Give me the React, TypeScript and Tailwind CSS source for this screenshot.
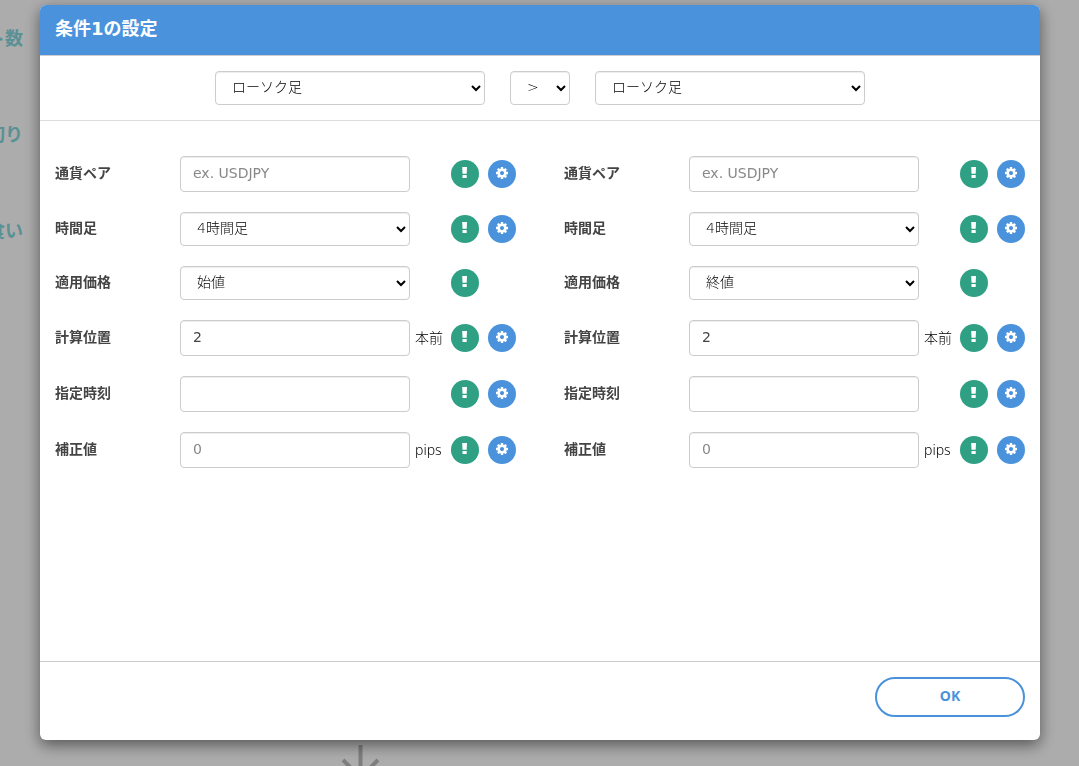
import React from 'react';

type Field = {
  name: string;
  label: string;
  type: 'text' | 'select';
  value?: string;
  placeholder?: string;
  options?: string[];
  unit?: string;
  configurable?: boolean;
};

const TIMEFRAMES = ['1分足', '5分足', '15分足', '30分足', '1時間足', '4時間足', '日足'];
const PRICES = ['始値', '高値', '安値', '終値'];
const INDICATORS = ['ローソク足', '移動平均線', 'RSI', 'MACD'];
const OPERATORS = ['>', '<', '='];

const buildFields = (price: string): Field[] => [
  { name: 'pair', label: '通貨ペア', type: 'text', placeholder: 'ex. USDJPY', configurable: true },
  { name: 'timeframe', label: '時間足', type: 'select', value: '4時間足', options: TIMEFRAMES, configurable: true },
  { name: 'price', label: '適用価格', type: 'select', value: price, options: PRICES },
  { name: 'shift', label: '計算位置', type: 'text', value: '2', unit: '本前', configurable: true },
  { name: 'time', label: '指定時刻', type: 'text', configurable: true },
  { name: 'offset', label: '補正値', type: 'text', placeholder: '0', unit: 'pips', configurable: true },
];

const controlClass =
  "w-full min-w-0 rounded border border-[#ccc] bg-white px-3 pb-0.5 font-['DejaVu_Sans','Noto_Sans_CJK_JP',sans-serif] text-sm shadow-[inset_0_1px_1px_rgba(0,0,0,0.075)]";
const selectClass = `${controlClass} h-[34px] font-light text-black`;
const inputClass = `${controlClass} h-9 text-[#444] placeholder:text-[#888]`;

const ExclamationIcon = () => (
  <svg viewBox="0 0 14 14" className="w-3.5 h-3.5" fill="currentColor" aria-hidden="true">
    <path d="M4.200 1h4.800l-.3 6.700H4.500zM4.500 9.100h4.200V12H4.500z" />
  </svg>
);

const CogIcon = () => (
  <svg viewBox="-128 0 1792 1792" className="w-3.5 h-3.5" fill="currentColor" aria-hidden="true">
    <path d="M1024 896q0-106-75-181t-181-75-181 75-75 181 75 181 181 75 181-75 75-181zm512-109v222q0 12-8 23t-20 13l-185 28q-19 54-39 91 35 50 107 138 10 12 10 25t-9 23q-27 37-99 108t-94 71q-12 0-26-9l-138-108q-44 23-91 38-16 136-29 186-7 28-36 28h-222q-14 0-24.500-8.500t-11.500-21.500l-28-184q-49-16-90-37l-141 107q-10 9-25 9-14 0-25-11-126-114-165-168-7-10-7-23 0-12 8-23 15-21 51-66.500t54-70.500q-27-50-41-99l-183-27q-13-2-21-12.500t-8-23.500v-222q0-12 8-23t19-13l186-28q14-46 39-92-40-57-107-138-10-12-10-24 0-10 9-23 26-36 98.500-107.500t94.500-71.500q13 0 26 10l138 107q44-23 91-38 16-136 29-186 7-28 36-28h222q14 0 24.500 8.500t11.500 21.500l28 184q49 16 90 37l142-107q9-9 24-9 13 0 25 10 129 119 165 170 7 8 7 22 0 12-8 23-15 21-51 66.500t-54 70.500q26 50 41 98l183 28q13 2 21 12.500t8 23.500z" />
  </svg>
);

const FieldRow: React.FC<{ side: string; field: Field }> = ({ side, field }) => {
  const id = `${side}-${field.name}`;

  return (
    <div className="flex items-center">
      <label htmlFor={id} className="w-[125px] shrink-0 pb-0.5 text-sm font-bold text-[#444]">
        {field.label}
      </label>
      <div className="flex-1 min-w-0">
        {field.type === 'select' ? (
          <select id={id} defaultValue={field.value} className={`${selectClass} block`}>
            {field.options?.map((option) => (
              <option key={option}>{option}</option>
            ))}
          </select>
        ) : (
          <input
            id={id}
            type="text"
            defaultValue={field.value}
            placeholder={field.placeholder}
            className={`${inputClass} block`}
          />
        )}
      </div>
      <span className="w-[41px] shrink-0 pl-[5px] text-sm font-light text-black">{field.unit}</span>
      <div className="flex w-[65px] shrink-0 gap-[9px]">
        <button
          type="button"
          aria-label={`${field.label}の説明`}
          className="flex h-7 w-7 items-center justify-center rounded-full bg-[#2fa084] pb-0.5 text-white"
        >
          <ExclamationIcon />
        </button>
        {field.configurable && (
          <button
            type="button"
            aria-label={`${field.label}の詳細設定`}
            className="flex h-7 w-7 items-center justify-center rounded-full bg-[#4a92db] pb-0.5 text-white"
          >
            <CogIcon />
          </button>
        )}
      </div>
    </div>
  );
};

const PageBehind = () => (
  <div className="h-screen overflow-hidden bg-[#f6f6f6]" aria-hidden="true">
    {/* Only the tail of each heading peeks out beside the dialog */}
    <ul className="flex h-[745px] w-[23px] flex-col items-end gap-[69px] pt-[25px] text-lg leading-[27px] font-bold whitespace-nowrap text-[#82d0d5]">
      <li>ロット数</li>
      <li>損切り</li>
      <li>利食い</li>
    </ul>
    <svg viewBox="0 0 40 40" className="ml-[340px] h-10 w-10 text-[#b5b5b5]" fill="none" stroke="currentColor" strokeWidth="4">
      <path d="M20.500 0v34M3 15l17.500 17.500L38 15" />
    </svg>
  </div>
);

export default function App() {
  return (
    <div className="font-['Noto_Sans','Noto_Sans_CJK_JP',sans-serif] text-[#333]">
      <PageBehind />

      <div className="fixed inset-0 overflow-hidden bg-black/30 pt-[5px] pr-[39px] pl-10">
        <div
          role="dialog"
          aria-labelledby="dialog-title"
          className="overflow-hidden rounded-md bg-white shadow-[0_5px_15px_rgba(0,0,0,0.5)]"
        >
          <div className="border-b border-[#ccc] bg-[#4a92db] px-[15px] pt-2.5 pb-[13px]">
            <h1
              id="dialog-title"
              className="font-['DejaVu_Sans','Noto_Sans_CJK_JP',sans-serif] text-lg leading-[27px] font-bold text-white"
            >
              条件1の設定
            </h1>
          </div>

          <div className="flex justify-center gap-[25px] border-b border-[#ddd] py-[15px]">
            <select aria-label="左辺の指標" className={`${selectClass} max-w-[270px]`}>
              {INDICATORS.map((name) => (
                <option key={name}>{name}</option>
              ))}
            </select>
            <select aria-label="比較演算子" className={`${selectClass} max-w-[60px]`}>
              {OPERATORS.map((op) => (
                <option key={op}>{op}</option>
              ))}
            </select>
            <select aria-label="右辺の指標" className={`${selectClass} max-w-[270px]`}>
              {INDICATORS.map((name) => (
                <option key={name}>{name}</option>
              ))}
            </select>
          </div>

          <div className="grid min-h-[540px] grid-cols-2 content-start gap-12 px-[15px] py-[35px]">
            {[
              { side: 'left', price: '始値' },
              { side: 'right', price: '終値' },
            ].map(({ side, price }) => (
              <div key={side} className="flex flex-col gap-5">
                {buildFields(price).map((field) => (
                  <FieldRow key={field.name} side={side} field={field} />
                ))}
              </div>
            ))}
          </div>

          <div className="flex justify-end border-t border-[#ccc] px-[15px] pt-[15px] pb-[23px]">
            <button
              type="button"
              className="h-10 w-[150px] rounded-full border-2 border-[#4a92db] bg-white pb-0.5 text-sm font-bold text-[#4a92db]"
            >
              OK
            </button>
          </div>
        </div>
      </div>
    </div>
  );
}
